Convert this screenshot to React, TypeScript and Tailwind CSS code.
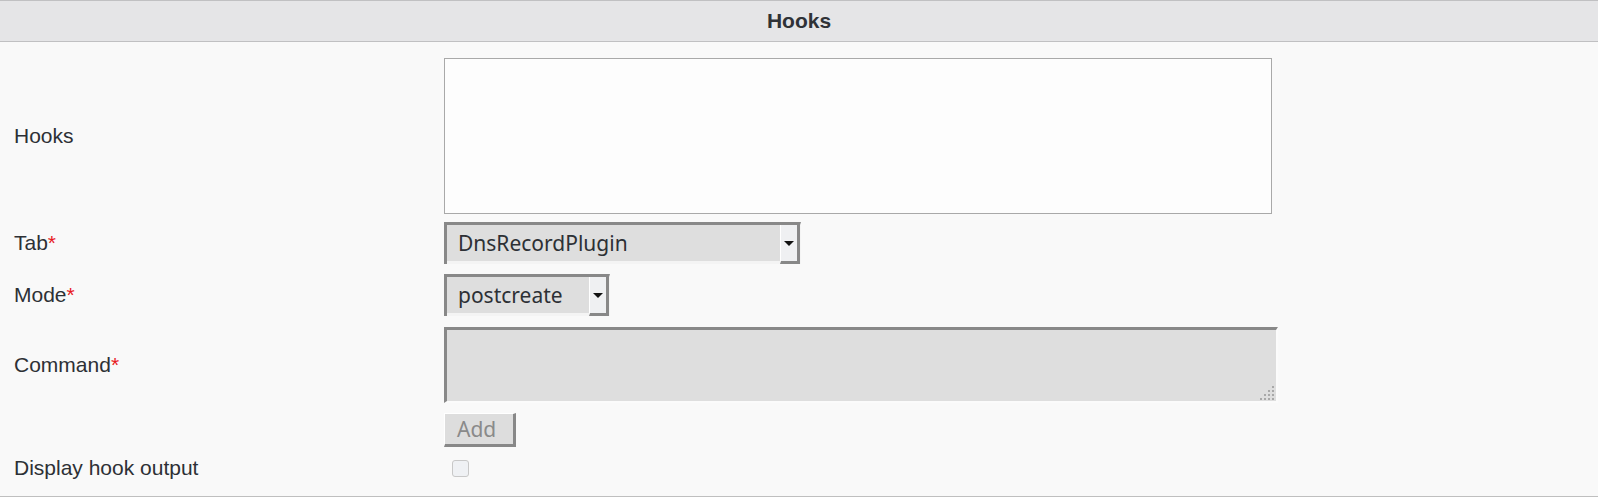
const labelFont = { fontFamily: '"Liberation Sans", Arial, sans-serif' };

function Required() {
  return <span className="text-[#e8191f]">*</span>;
}

function FakeSelect({ value, width }: { value: string; width: string }) {
  return (
    <div
      className={`flex h-[42px] ${width} border-t-[3px] border-l-[3px] border-r border-t-[#888888] border-l-[#888888] border-r-[#f4f4f4]`}
    >
      <div className="flex-1 flex items-center pl-[11px] bg-[#dedede] border-b-[3px] border-b-[#f4f4f4] text-[21px] text-[#2d3035] font-['Noto_Sans',sans-serif] leading-none">
        {value}
      </div>
      <div className="w-[20px] flex items-center justify-center bg-[#eff0f2] border-l border-l-white border-r-[3px] border-b-[3px] border-r-[#888888] border-b-[#888888]">
        <svg width="10" height="5" viewBox="0 0 10 5">
          <path d="M0 0 H10 L5 5 Z" fill="#111" />
        </svg>
      </div>
    </div>
  );
}

function Grip() {
  const dots: [number, number][] = [];
  for (let r = 0; r < 4; r++) {
    for (let c = 3 - r; c < 4; c++) dots.push([c * 4, r * 4]);
  }
  return (
    <svg className="absolute right-[3px] bottom-[2px]" width="15" height="15" viewBox="0 0 15 15">
      {dots.map(([x, y], i) => (
        <rect key={i} x={x} y={y} width="2" height="2" fill="#a8a8a8" />
      ))}
    </svg>
  );
}

function Row({ label, children, className = '' }: { label: React.ReactNode; children: React.ReactNode; className?: string }) {
  return (
    <div className={`flex items-center ${className}`}>
      <div className="w-[444px] shrink-0 pl-[14px] text-[21px] text-[#2d3035]" style={labelFont}>
        {label}
      </div>
      <div className="flex-1">{children}</div>
    </div>
  );
}

export default function App() {
  return (
    <div className="w-[1598px] h-[497px] bg-[#f9f9f9] border-b border-[#bfbfbf] overflow-hidden">
      <div className="h-[42px] bg-[#e5e5e7] border-y border-[#c0c0c2] flex items-center justify-center">
        <h1 className="text-[21px] font-bold text-[#2f3237]" style={labelFont}>
          Hooks
        </h1>
      </div>

      <Row label="Hooks" className="mt-[16px]">
        <textarea className="block w-[828px] h-[156px] border border-[#a9a9a9] bg-[#fdfdfd] resize-none outline-none" />
      </Row>

      <Row label={<>Tab<Required /></>} className="mt-[8px]">
        <FakeSelect value="DnsRecordPlugin" width="w-[357px]" />
      </Row>

      <Row label={<>Mode<Required /></>} className="mt-[10px]">
        <FakeSelect value="postcreate" width="w-[166px]" />
      </Row>

      <Row label={<>Command<Required /></>} className="mt-[11px]">
        <div className="relative w-[834px] h-[76px]">
          <textarea className="block w-full h-full bg-[#dedede] border-t-[3px] border-l-[3px] border-r-2 border-b-2 border-t-[#888888] border-l-[#888888] border-r-[#fbfbfb] border-b-[#fbfbfb] resize-none outline-none" />
          <Grip />
        </div>
      </Row>

      <div className="flex mt-[10px] pl-[444px]">
        <button className="h-[34px] w-[72px] pl-[12px] text-left bg-[#dddddd] border-t border-l border-t-white border-l-white border-r-[3px] border-b-[3px] border-r-[#888888] border-b-[#888888] text-[21px] text-[#8a8a8a] font-['Noto_Sans',sans-serif] leading-none">
          Add
        </button>
      </div>

      <Row label="Display hook output" className="mt-[9px] h-[24px]">
        <div className="ml-[8px] w-[17px] h-[17px] rounded-[3px] border border-[#c8c8c8] bg-[#eff1f4]" />
      </Row>
    </div>
  );
}
